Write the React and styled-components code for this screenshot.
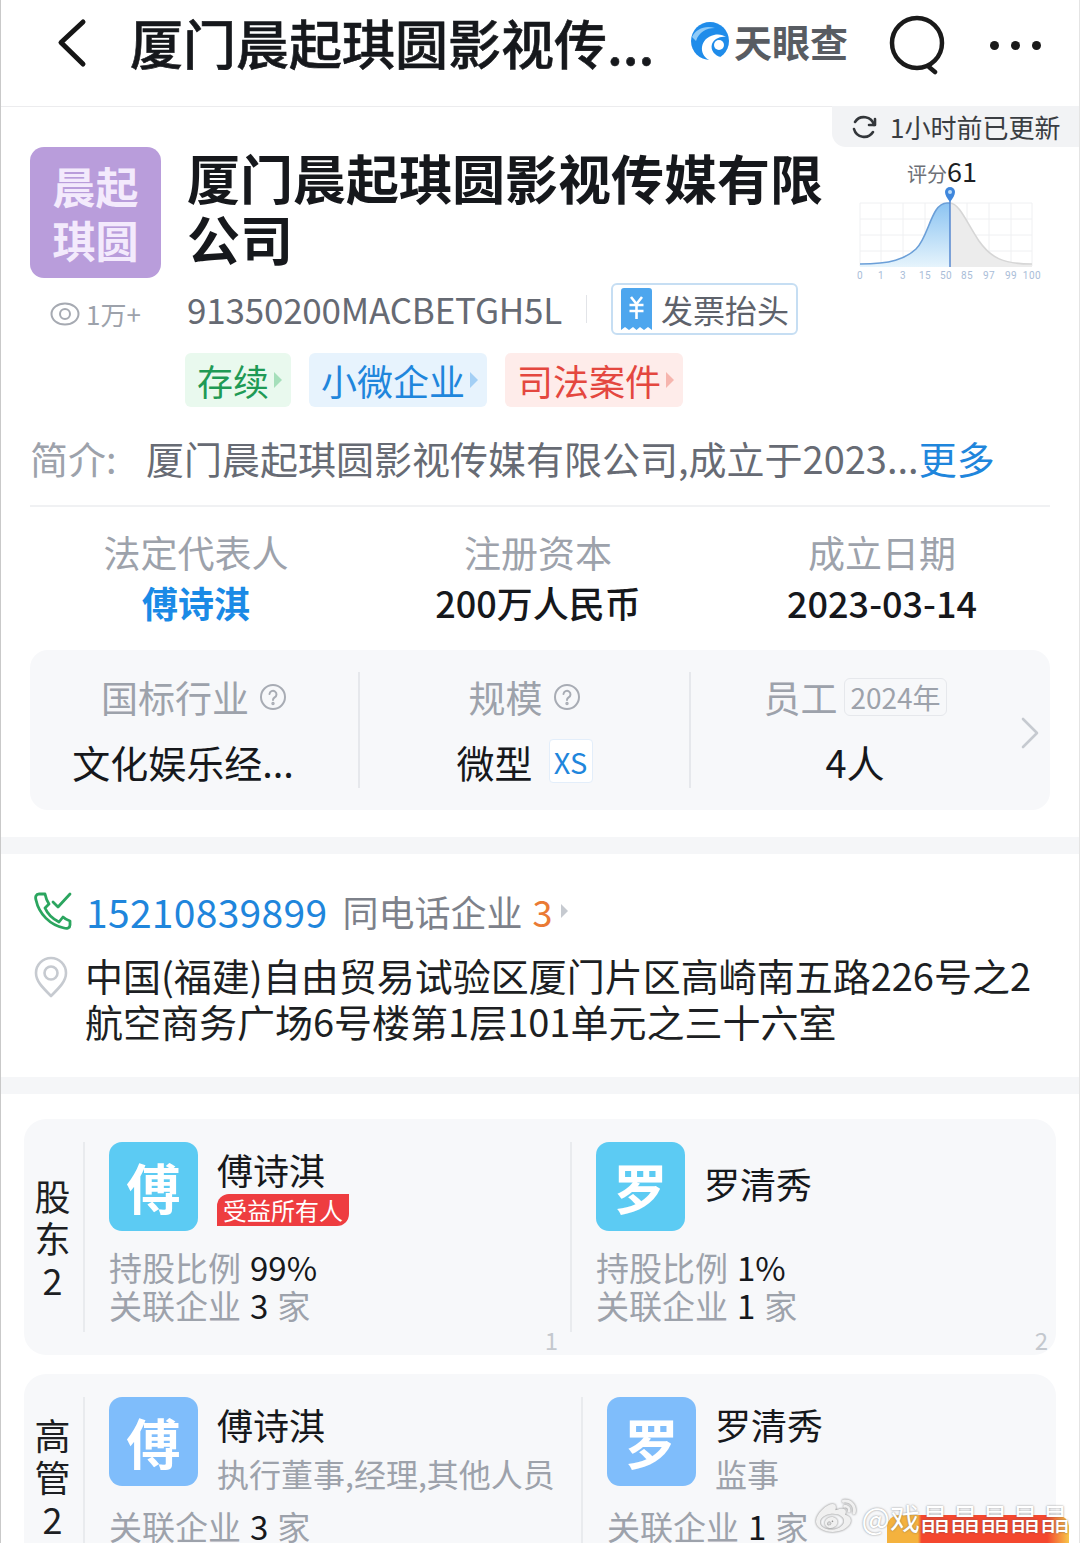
import React from 'react'
import styled, { createGlobalStyle } from 'styled-components'
import { FaWeibo } from 'react-icons/fa'

const GlobalStyle = createGlobalStyle`
  html, body {
    margin: 0;
    padding: 0;
    background: #fff;
  }
  * {
    box-sizing: border-box;
  }
`

const FONT = `"Noto Sans CJK SC", "Noto Sans", sans-serif`
const GRAY = '#9da2ab'

const Page = styled.div`
  position: relative;
  width: 1080px;
  height: 1543px;
  overflow: hidden;
  background: #fff;
  font-family: ${FONT};
  color: #16181c;
  border-left: 1px solid #c9c9c9;
  border-right: 1px solid #e4e4e4;
`

const Header = styled.header`
  height: 107px;
  display: flex;
  align-items: flex-start;
  padding: 18px 0 0 54px;
  border-bottom: 1px solid #ececee;
`

const HeaderTitle = styled.div`
  margin: -3px 0 0 41px;
  width: 540px;
  font-size: 53px;
  line-height: 54px;
  font-weight: 500;
  -webkit-text-stroke: 0.6px #16181c;
  white-space: nowrap;
`

const Brand = styled.div`
  display: flex;
  align-items: center;
  margin: 1px 0 0 20px;
  width: 170px;
`

const BrandText = styled.span`
  margin-left: 4px;
  font-size: 38px;
  line-height: 44px;
  font-weight: 700;
  color: #585c62;
  white-space: nowrap;
`

const HeaderIcons = styled.div`
  display: flex;
  align-items: center;
  gap: 42px;
  margin: -3px 0 0 28px;
`

const Dots = styled.div`
  display: flex;
  gap: 12px;
`

const Dot = styled.span`
  width: 9px;
  height: 9px;
  border-radius: 50%;
  background: #1a1a1a;
`

const UpdateBadge = styled.div`
  position: absolute;
  top: 106px;
  right: 0;
  width: 247px;
  height: 41px;
  display: flex;
  align-items: center;
  gap: 13px;
  padding-left: 19px;
  background: #f2f3f5;
  border-bottom-left-radius: 14px;
  font-size: 26px;
  color: #3a3d42;
  white-space: nowrap;
`

const Summary = styled.section`
  padding: 40px 29px 0;
`

const Hero = styled.div`
  display: flex;
`

const LogoColumn = styled.div`
  width: 157px;
  flex: none;
`

const Logo = styled.div`
  width: 131px;
  height: 131px;
  border-radius: 14px;
  background: #b99ddb;
  color: #f3eafc;
  font-size: 43px;
  line-height: 54px;
  font-weight: 700;
  text-align: center;
  padding-top: 11px;
`

const Views = styled.div`
  display: flex;
  align-items: center;
  gap: 6px;
  margin: 18px 0 0 20px;
  font-size: 26px;
  line-height: 36px;
  color: ${GRAY};
`

const HeroMain = styled.div`
  width: 650px;
  flex: none;
`

const CompanyName = styled.h1`
  margin: 0;
  font-size: 53px;
  line-height: 61px;
  font-weight: 700;
`

const CreditRow = styled.div`
  display: flex;
  align-items: center;
  margin-top: 14px;
  height: 52px;
`

const CreditCode = styled.span`
  font-size: 35px;
  line-height: 50px;
  letter-spacing: -0.2px;
  color: #666a73;
  white-space: nowrap;
`

const VSep = styled.span`
  width: 1px;
  height: 28px;
  margin: 0 24px;
  background: #e2e4e8;
`

const InvoiceButton = styled.div`
  display: flex;
  align-items: center;
  gap: 9px;
  width: 187px;
  height: 52px;
  padding-left: 8px;
  border: 2px solid #c6def3;
  border-radius: 6px;
  font-size: 32px;
  color: #5e626b;
  white-space: nowrap;
`

const TagRow = styled.div`
  display: flex;
  gap: 18px;
  margin-top: 18px;
  margin-left: -2px;
`

const Tag = styled.div`
  display: flex;
  align-items: center;
  gap: 5px;
  height: 54px;
  padding: 0 9px 0 12px;
  border-radius: 6px;
  font-size: 36px;
  white-space: nowrap;
  color: ${p => p.$color};
  background: ${p => p.$bg};
`

const Caret = styled.span`
  width: 0;
  height: 0;
  border-top: 8px solid transparent;
  border-bottom: 8px solid transparent;
  border-left: 8px solid ${p => p.$color};
`

const ChartColumn = styled.div`
  width: 190px;
  flex: none;
  margin: 8px 0 0 14px;
`

const ScoreHead = styled.div`
  display: flex;
  align-items: baseline;
  justify-content: center;
  height: 32px;
  margin-right: 8px;
  line-height: 32px;
`

const ScoreLabel = styled.span`
  font-size: 20px;
  color: #6d7077;
`

const ScoreValue = styled.span`
  font-size: 27px;
  color: #1d1f23;
`

const Intro = styled.div`
  display: flex;
  margin-top: 26px;
  padding-bottom: 22px;
  font-size: 38px;
  line-height: 50px;
  white-space: nowrap;
  border-bottom: 2px solid #f0f1f3;
  color: #676b74;
`

const IntroLabel = styled.span`
  width: 116px;
  flex: none;
  color: ${GRAY};
`

const IntroMore = styled.span`
  color: #1f86dc;
`

const Stats = styled.div`
  display: grid;
  grid-template-columns: 332px 352px 336px;
  margin-top: 20px;
  text-align: center;
`

const StatLabel = styled.div`
  font-size: 37px;
  line-height: 50px;
  color: ${GRAY};
`

const StatValue = styled.div`
  font-size: 36px;
  line-height: 50px;
  font-weight: ${p => (p.$link ? 700 : 500)};
  color: ${p => (p.$link ? '#1a8ae6' : '#16181c')};
`

const InfoCard = styled.div`
  position: relative;
  display: grid;
  grid-template-columns: 330px 331px 328px;
  height: 160px;
  margin-top: 23px;
  padding-top: 22px;
  border-radius: 18px;
  background: #f7f8fa;
`

const InfoCell = styled.div`
  display: flex;
  flex-direction: column;
  align-items: center;
  gap: 14px;
  height: 116px;
  border-right: ${p => (p.$last ? 'none' : '2px solid #e6e8ec')};
`

const InfoLabel = styled.div`
  display: flex;
  align-items: center;
  gap: 10px;
  height: 50px;
  font-size: 37px;
  color: ${GRAY};
  white-space: nowrap;
`

const InfoValue = styled.div`
  display: flex;
  align-items: center;
  gap: 16px;
  height: 50px;
  margin-right: ${p => p.$shift || 0}px;
  font-size: 38px;
  white-space: nowrap;
`

const YearChip = styled.span`
  padding: 0 5px;
  font-size: 28px;
  line-height: 36px;
  border: 1px solid #e6e8ec;
  border-radius: 6px;
  color: ${GRAY};
  margin-left: -3px;
`

const SizeChip = styled.span`
  width: 44px;
  height: 44px;
  display: flex;
  align-items: center;
  justify-content: center;
  font-size: 29px;
  color: #1f86dc;
  background: #fff;
  border: 1px solid #e3eefa;
  border-radius: 4px;
`

const CardArrow = styled.div`
  position: absolute;
  top: 66px;
  right: 10px;
`

const Band = styled.div`
  height: 17px;
  background: #f5f6f8;
`

const Contact = styled.section`
  padding: 32px 0 33px 33px;
`

const PhoneRow = styled.div`
  display: flex;
  align-items: center;
  height: 50px;
  white-space: nowrap;
`

const PhoneNumber = styled.span`
  margin-left: 14px;
  font-size: 39px;
  letter-spacing: 0.3px;
  color: #1f86dc;
`

const PhoneMeta = styled.span`
  margin-left: 15px;
  font-size: 36px;
  color: #7d818a;
`

const PhoneCount = styled.span`
  margin-left: 10px;
  font-size: 36px;
  color: #ea7a34;
`

const SmallCaret = styled.span`
  margin-left: 9px;
  width: 0;
  height: 0;
  border-top: 7px solid transparent;
  border-bottom: 7px solid transparent;
  border-left: 7px solid #c6cad0;
`

const AddressRow = styled.div`
  display: flex;
  gap: 17px;
  margin-top: 16px;
`

const PinBox = styled.div`
  width: 34px;
  flex: none;
  padding-top: 4px;
`

const AddressText = styled.div`
  width: 970px;
  font-size: 38px;
  line-height: 46px;
  color: #1d1f23;
`

const People = styled.section`
  padding: 25px 23px 0;
`

const PeopleCard = styled.div`
  display: flex;
  height: ${p => p.$height}px;
  margin-bottom: 19px;
  padding-top: 23px;
  background: #f7f8fa;
  border-radius: 22px;
`

const SideLabel = styled.div`
  width: 61px;
  height: 190px;
  flex: none;
  display: flex;
  flex-direction: column;
  align-items: center;
  justify-content: ${p => (p.$low ? 'flex-start' : 'center')};
  padding-top: ${p => (p.$low ? 16 : 0)}px;
  padding-right: 2px;
  border-right: 2px solid #e9ebee;
  font-size: 36px;
  line-height: 42px;
  color: #1d1f23;
`

const PersonCol = styled.div`
  position: relative;
  width: ${p => p.$width}px;
  padding-left: ${p => p.$inset}px;
  border-right: ${p => (p.$line ? '2px solid #e9ebee' : 'none')};
  height: 190px;
`

const PersonHead = styled.div`
  display: flex;
  gap: 19px;
`

const Avatar = styled.div`
  width: 89px;
  height: 89px;
  flex: none;
  display: flex;
  align-items: center;
  justify-content: center;
  border-radius: 13px;
  font-size: 54px;
  font-weight: 700;
  color: #fff;
  background: ${p => p.$color};
`

const PersonInfo = styled.div`
  display: flex;
  flex-direction: column;
  justify-content: ${p => (p.$center ? 'center' : 'flex-start')};
  min-height: 89px;
  white-space: nowrap;
`

const PersonName = styled.div`
  font-size: 36px;
  line-height: 54px;
  height: 52px;
  margin-top: ${p => (p.$center ? -9 : 0)}px;
  color: #16181c;
`

const OwnerBadge = styled.div`
  width: 132px;
  height: 32px;
  border-radius: 12px 0 12px 0;
  background: #ee3d40;
  color: #fff;
  font-size: 24px;
  line-height: 32px;
  text-align: center;
`

const PersonRole = styled.div`
  margin-top: 2px;
  font-size: 32px;
  line-height: 44px;
  color: ${GRAY};
`

const StatLines = styled.div`
  margin-top: ${p => p.$top}px;
  font-size: 33px;
  line-height: 38px;
  color: ${GRAY};
  white-space: nowrap;
`

const Dark = styled.span`
  margin: 0 9px;
  color: #16181c;
`

const PageNo = styled.span`
  position: absolute;
  right: ${p => p.$right}px;
  bottom: -22px;
  font-size: 24px;
  line-height: 28px;
  color: #c4c8ce;
`

const Watermark = styled.div`
  position: absolute;
  right: 9px;
  bottom: 6px;
  display: flex;
  align-items: center;
  gap: 6px;
  font-size: 30px;
  line-height: 36px;
  white-space: nowrap;
  color: #fff;
  text-shadow: 0 0 2px rgba(90, 90, 90, 0.75);
`

const VipBanner = styled.div`
  position: absolute;
  right: 10px;
  bottom: 0;
  width: 182px;
  height: 28px;
  border-radius: 12px 12px 0 0;
  background: linear-gradient(90deg, #f4b23e 0, #f4b23e 17%, #f4472e 19%, #f4472e 88%, #f7c64a 100%);
`

const BackIcon = () => (
  <svg width="34" height="50" viewBox="0 0 34 50" fill="none">
    <path d="M28 4 L6 24.500 L28 46" stroke="#161616" strokeWidth="5" strokeLinecap="round" strokeLinejoin="round" />
  </svg>
)

const BrandMark = () => (
  <svg width="40" height="40" viewBox="0 0 40 40">
    <circle cx="20" cy="20" r="19" fill="#1f8cea" />
    <path d="M19 39 C8 33 10 17 24 14 C29 13 33 14 36 16 C30 15 24 18 22 23 C20 29 25 35 31 36 C27 39 23 40 19 39Z" fill="#fff" />
    <path d="M2 16 C6 8 15 4 25 7 C16 7 9 11 6 20Z" fill="#8fcaf7" />
    <circle cx="29" cy="24" r="5" fill="#fff" />
  </svg>
)

const SearchIcon = () => (
  <svg width="60" height="60" viewBox="0 0 60 60" fill="none">
    <circle cx="29" cy="28" r="25" stroke="#1a1a1a" strokeWidth="4.500" />
    <path d="M41 52 L47 57" stroke="#1a1a1a" strokeWidth="4.500" strokeLinecap="round" />
  </svg>
)

const RefreshIcon = () => (
  <svg width="26" height="26" viewBox="0 0 26 26" fill="none" stroke="#33363a" strokeWidth="2.600" strokeLinecap="round">
    <path d="M3 15 A10.500 10.500 0 0 0 22 18" />
    <path d="M23 11 A10.500 10.500 0 0 0 4 8" />
    <path d="M24 5 V11 H18" strokeLinejoin="round" />
  </svg>
)

const EyeIcon = () => (
  <svg width="30" height="24" viewBox="0 0 30 24" fill="none" stroke="#a6aab2" strokeWidth="2">
    <ellipse cx="15" cy="12" rx="13.500" ry="10.500" />
    <circle cx="15" cy="12" r="5" />
  </svg>
)

const ReceiptIcon = () => (
  <svg width="31" height="42" viewBox="0 0 31 42">
    <path d="M3 0 H28 A3 3 0 0 1 31 3 V42 L27 39 L23 42 L19 39 L15.500 42 L12 39 L8 42 L4 39 L0 42 V3 A3 3 0 0 1 3 0Z" fill="#4da6ee" />
    <path d="M10 9 L15.500 16 L21 9 M8.500 17 H22.500 M8.500 23 H22.500 M15.500 16 V31" stroke="#fff" strokeWidth="2.600" fill="none" />
  </svg>
)

const HelpIcon = () => (
  <svg width="28" height="28" viewBox="0 0 28 28" fill="none" stroke="#a8acb4" strokeWidth="2">
    <circle cx="14" cy="14" r="12" />
    <path d="M10.500 11 A3.500 3.500 0 1 1 15.500 14.500 Q14 15.300 14 17" strokeLinecap="round" />
    <circle cx="14" cy="20.500" r="0.700" />
  </svg>
)

const ChevronRight = () => (
  <svg width="20" height="34" viewBox="0 0 20 34" fill="none">
    <path d="M3 3 L17 17 L3 31" stroke="#c6cad0" strokeWidth="2.600" strokeLinecap="round" strokeLinejoin="round" />
  </svg>
)

const PhoneIcon = () => (
  <svg width="38" height="38" viewBox="0 0 38 38" fill="none" stroke="#2ba55f" strokeWidth="2.800" strokeLinecap="round" strokeLinejoin="round">
    <path d="M5 2 L11 2 C12 7 13 9 15 12 L11 16 C14 23 19 27 25 30 L29 25 C31 27 33 28 36 29 L36 33 C36 36 33 37 30 36 C16 33 5 22 2 8 C1 5 2 2 5 2Z" />
    <path d="M19 10 L24 15 L36 2" />
  </svg>
)

const PinIcon = () => (
  <svg width="34" height="42" viewBox="0 0 34 42" fill="none" stroke="#c6cad0" strokeWidth="2.600">
    <path d="M17 40 C8 31 2 25 2 17 A15 15 0 0 1 32 17 C32 25 26 31 17 40Z" strokeLinejoin="round" />
    <circle cx="17" cy="17" r="6.500" />
  </svg>
)

// x positions of the score chart ticks
const TICKS = [
  ['0', 9], ['1', 30], ['3', 52], ['15', 74], ['50', 95], ['85', 116], ['97', 138], ['99', 160], ['100', 181]
]

const ScoreChart = () => (
  <svg width="190" height="98" viewBox="0 0 190 98">
    <defs>
      <linearGradient id="curveBlue" x1="0" y1="0" x2="0" y2="1">
        <stop offset="0" stopColor="#8cc4f2" />
        <stop offset="1" stopColor="#e6f4fc" />
      </linearGradient>
    </defs>
    <g stroke="#eff0f2" strokeWidth="1">
      {[16, 32, 48, 64].map(y => <path key={y} d={`M9 ${y} H181`} />)}
      {[9, 30, 52, 74, 95, 116, 138, 160, 181].map(x => <path key={x} d={`M${x} 16 V79`} />)}
    </g>
    <path d="M99 16 C108 16 116 36 128 54 C140 71 152 77 181 77 V80 H99Z" fill="#ececec" />
    <path d="M99 16 C108 16 116 36 128 54 C140 71 152 77 181 77" stroke="#d6d6d6" strokeWidth="1.600" fill="none" />
    <path d="M9 77 C40 77 54 72 65 62 C78 50 80 16 96 16 H99 V80 H9Z" fill="url(#curveBlue)" />
    <path d="M9 77 C40 77 54 72 65 62 C78 50 80 16 96 16 H99" stroke="#6b9fd8" strokeWidth="1.600" fill="none" />
    <path d="M99 10 V80" stroke="#4d82cf" strokeWidth="1.400" />
    <path d="M99 14 C96 10 94 7 94 4 A5 5 0 0 1 104 4 C104 7 102 10 99 14Z" fill="#3f87dc" transform="translate(0 1)" />
    <circle cx="99" cy="5" r="2" fill="#bcdcf8" />
    {TICKS.map(([label, x]) => (
      <text key={label} x={x} y="92" fontSize="10" fill="#a9bdd8" textAnchor="middle" fontFamily="Roboto, sans-serif" letterSpacing="0.5">
        {label}
      </text>
    ))}
  </svg>
)

const TAGS = [
  { text: '存续', color: '#1f9a55', bg: '#e9f9ee', caret: '#a5dfba' },
  { text: '小微企业', color: '#1f86dc', bg: '#e7f3fd', caret: '#a3cff5' },
  { text: '司法案件', color: '#e4473f', bg: '#feecea', caret: '#f6b5ae' }
]

const App = () => {
  return (
    <Page>
      <GlobalStyle />
      <Header>
        <BackIcon />
        <HeaderTitle>厦门晨起琪圆影视传...</HeaderTitle>
        <Brand>
          <BrandMark />
          <BrandText>天眼查</BrandText>
        </Brand>
        <HeaderIcons>
          <SearchIcon />
          <Dots>
            <Dot />
            <Dot />
            <Dot />
          </Dots>
        </HeaderIcons>
      </Header>

      <UpdateBadge>
        <RefreshIcon />
        1小时前已更新
      </UpdateBadge>

      <Summary>
        <Hero>
          <LogoColumn>
            <Logo>晨起<br />琪圆</Logo>
            <Views>
              <EyeIcon />
              1万+
            </Views>
          </LogoColumn>
          <HeroMain>
            <CompanyName>厦门晨起琪圆影视传媒有限公司</CompanyName>
            <CreditRow>
              <CreditCode>91350200MACBETGH5L</CreditCode>
              <VSep />
              <InvoiceButton>
                <ReceiptIcon />
                发票抬头
              </InvoiceButton>
            </CreditRow>
            <TagRow>
              {TAGS.map(tag => (
                <Tag key={tag.text} $color={tag.color} $bg={tag.bg}>
                  {tag.text}
                  <Caret $color={tag.caret} />
                </Tag>
              ))}
            </TagRow>
          </HeroMain>
          <ChartColumn>
            <ScoreHead>
              <ScoreLabel>评分</ScoreLabel>
              <ScoreValue>61</ScoreValue>
            </ScoreHead>
            <ScoreChart />
          </ChartColumn>
        </Hero>

        <Intro>
          <IntroLabel>简介:</IntroLabel>
          厦门晨起琪圆影视传媒有限公司,成立于2023...
          <IntroMore>更多</IntroMore>
        </Intro>

        <Stats>
          <div>
            <StatLabel>法定代表人</StatLabel>
            <StatValue $link>傅诗淇</StatValue>
          </div>
          <div>
            <StatLabel>注册资本</StatLabel>
            <StatValue>200万人民币</StatValue>
          </div>
          <div>
            <StatLabel>成立日期</StatLabel>
            <StatValue>2023-03-14</StatValue>
          </div>
        </Stats>

        <InfoCard>
          <InfoCell>
            <InfoLabel>国标行业<HelpIcon /></InfoLabel>
            <InfoValue $shift={22}>文化娱乐经...</InfoValue>
          </InfoCell>
          <InfoCell>
            <InfoLabel>规模<HelpIcon /></InfoLabel>
            <InfoValue>微型<SizeChip>XS</SizeChip></InfoValue>
          </InfoCell>
          <InfoCell $last>
            <InfoLabel>员工<YearChip>2024年</YearChip></InfoLabel>
            <InfoValue>4人</InfoValue>
          </InfoCell>
          <CardArrow>
            <ChevronRight />
          </CardArrow>
        </InfoCard>
      </Summary>

      <Band style={{ marginTop: 27 }} />

      <Contact>
        <PhoneRow>
          <PhoneIcon />
          <PhoneNumber>15210839899</PhoneNumber>
          <PhoneMeta>同电话企业</PhoneMeta>
          <PhoneCount>3</PhoneCount>
          <SmallCaret />
        </PhoneRow>
        <AddressRow>
          <PinBox>
            <PinIcon />
          </PinBox>
          <AddressText>中国(福建)自由贸易试验区厦门片区高崎南五路226号之2航空商务广场6号楼第1层101单元之三十六室</AddressText>
        </AddressRow>
      </Contact>

      <Band />

      <People>
        <PeopleCard $height={236}>
          <SideLabel>
            <span>股</span>
            <span>东</span>
            <span>2</span>
          </SideLabel>
          <PersonCol $width={487} $inset={24} $line>
            <PersonHead>
              <Avatar $color="#5ccbf3">傅</Avatar>
              <PersonInfo>
                <PersonName>傅诗淇</PersonName>
                <OwnerBadge>受益所有人</OwnerBadge>
              </PersonInfo>
            </PersonHead>
            <StatLines $top={17}>
              持股比例<Dark>99%</Dark><br />
              关联企业<Dark>3</Dark>家
            </StatLines>
            <PageNo $right={12}>1</PageNo>
          </PersonCol>
          <PersonCol $width={484} $inset={24}>
            <PersonHead>
              <Avatar $color="#5ccbf3">罗</Avatar>
              <PersonInfo $center>
                <PersonName $center>罗清秀</PersonName>
              </PersonInfo>
            </PersonHead>
            <StatLines $top={17}>
              持股比例<Dark>1%</Dark><br />
              关联企业<Dark>1</Dark>家
            </StatLines>
            <PageNo $right={8}>2</PageNo>
          </PersonCol>
        </PeopleCard>

        <PeopleCard $height={220}>
          <SideLabel $low>
            <span>高</span>
            <span>管</span>
            <span>2</span>
          </SideLabel>
          <PersonCol $width={498} $inset={24} $line>
            <PersonHead>
              <Avatar $color="#7fbdfb">傅</Avatar>
              <PersonInfo>
                <PersonName>傅诗淇</PersonName>
                <PersonRole>执行董事,经理,其他人员</PersonRole>
              </PersonInfo>
            </PersonHead>
            <StatLines $top={12}>
              关联企业<Dark>3</Dark>家
            </StatLines>
          </PersonCol>
          <PersonCol $width={473} $inset={24}>
            <PersonHead>
              <Avatar $color="#7fbdfb">罗</Avatar>
              <PersonInfo>
                <PersonName>罗清秀</PersonName>
                <PersonRole>监事</PersonRole>
              </PersonInfo>
            </PersonHead>
            <StatLines $top={12}>
              关联企业<Dark>1</Dark>家
            </StatLines>
          </PersonCol>
        </PeopleCard>
      </People>

      <VipBanner />
      <Watermark>
        <FaWeibo size={40} color="#f0f0f0" style={{ filter: 'drop-shadow(0 0 1px #777)' }} />
        @戏晶晶晶晶晶
      </Watermark>
    </Page>
  )
}

export default App
